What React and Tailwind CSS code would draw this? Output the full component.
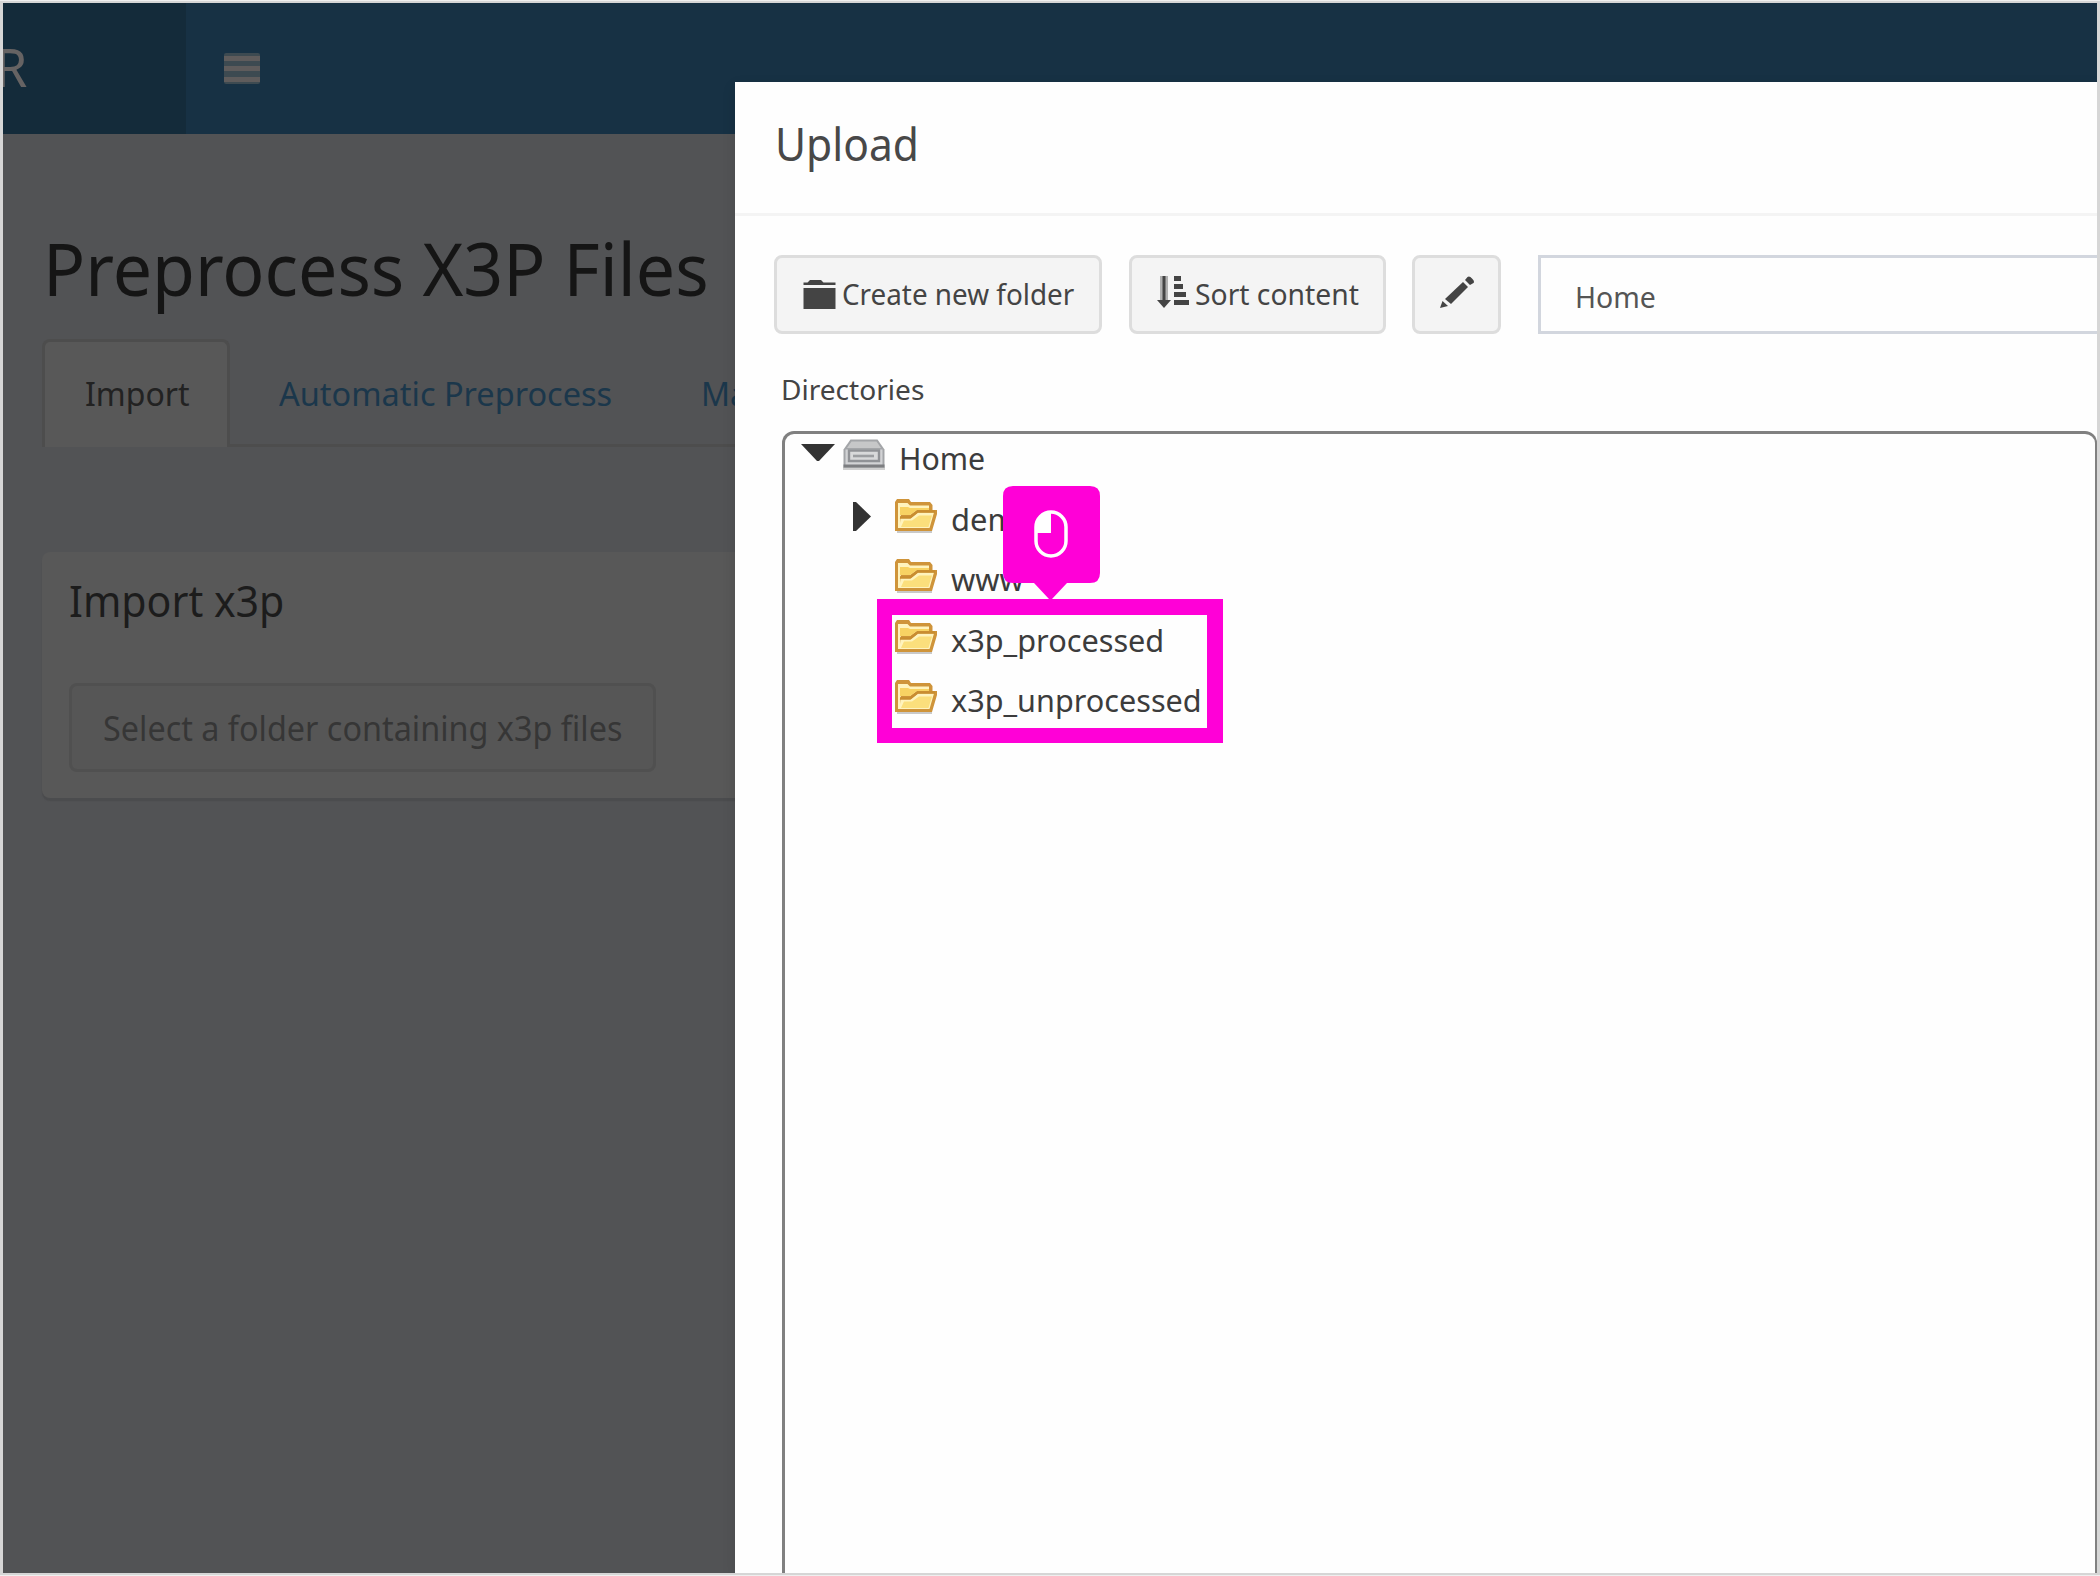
function FolderIcon() {
  return (
    <svg className="h-[34px] w-[42px] shrink-0" viewBox="0 0 42 34">
      <path d="M2 31.500H37V34H2Z" fill="#c9c9c9" />
      <path d="M0 3L2 0H14L16 3H35L37.500 6V11H42V15L37 32H0Z" fill="#cf943a" />
      <path d="M3 6V4H12.500L15 6.500H34V11H22L15 16H6L3 24Z" fill="#fff3bd" />
      <path d="M5 8H13L15 9H34V11H22L15 16H5Z" fill="#f8d263" />
      <path d="M3 22L5.500 17V29H3Z" fill="#fff3bd" />
      <path d="M6 19H16L23 13.500H39L34.500 29H4Z" fill="#fff3bd" />
      <path d="M9 21.500H17L24 16.500H37L33.500 28H6Z" fill="#fbdf7c" />
      <path d="M5 18.500H15L22.500 12.500H40" fill="none" stroke="#c98d30" strokeWidth="2.400" />
    </svg>
  );
}

function DriveIcon() {
  return (
    <svg className="h-[31px] w-[42px] shrink-0" viewBox="0 0 42 31">
      <path d="M0 28H42V31H0Z" fill="#cfcfcf" />
      <path d="M7.500 0.500H34.500L41.500 10.500V28.500H0.500V10.500Z" fill="#a3a5a8" />
      <path d="M8.500 2.500H33.500L38 9H4Z" fill="#c6c7c8" />
      <path d="M2.500 10.500H39.500V26H2.500Z" fill="#d2d3d5" />
      <path d="M6 11.500H36V22H6Z" fill="#d8d9da" stroke="#909296" strokeWidth="2.400" />
      <path d="M10 17H31" stroke="#9c9ea1" strokeWidth="2.600" />
      <path d="M0.500 27H41.500" stroke="#7d7e81" strokeWidth="3" />
    </svg>
  );
}

function NewFolderIcon() {
  return (
    <svg className="h-[29px] w-[33px] shrink-0" viewBox="0 0 33 29" fill="#444">
      <path d="M0.500 5V2.500H4.500L7 0H18L20.500 2.500H32.500V5Z" />
      <path d="M0.500 8H32.500V29H0.500Z" />
    </svg>
  );
}

function SortIcon() {
  return (
    <svg className="h-[32px] w-[33px] shrink-0" viewBox="0 0 33 32">
      <path d="M4 0H12V24H4Z" fill="#b0b0b0" />
      <path d="M6.500 0H9.500V24H15L8 32L1 24H6.500Z" fill="#444" />
      <path d="M18 0H25V5H18ZM18 8H27V13H18ZM18 16H30V21H18ZM18 24H33V29H18Z" fill="#444" />
    </svg>
  );
}

function PencilIcon() {
  return (
    <svg className="h-[32px] w-[34px] shrink-0" viewBox="0 0 34 32" fill="#444">
      <path d="M0 32L2.500 25L8 30Z" />
      <path d="M5 23L23 6L28 11L11 28Z" />
      <path d="M25 4L27.500 1Q29.500 -0.500 32 2.500Q35 5.500 33.500 7L30 9Z" />
    </svg>
  );
}

function TreeFolder({ name, expandable, scale }) {
  return (
    <li className="flex h-[60.5px] items-start pl-[68px]">
      <span className="mt-[3px] mr-6 w-[18px]">
        {expandable && (
          <svg className="h-[29px] w-[18px]" viewBox="0 0 18 29">
            <path d="M0 0H3L18 14.500L3 29H0Z" fill="#333" />
          </svg>
        )}
      </span>
      <FolderIcon />
      <span className={"mt-px ml-[14px] origin-left whitespace-nowrap " + scale}>{name}</span>
    </li>
  );
}

export default function App() {
  return (
    <div className="h-[1576px] w-[2100px] bg-[#efefef] py-px font-['Noto_Sans',sans-serif]">
      <div className="relative h-[1574px] overflow-hidden border-x-3 border-y-2 border-[#d6d6d6] bg-[#525355]">
        <header className="flex h-[131px] bg-[#173144]">
          <div className="w-[183px] overflow-hidden bg-[#142b3a] pt-[22px]">
            <span className="-ml-[8px] block text-[52px] leading-[84px] text-[#666363]">R</span>
          </div>
          <svg className="mt-[50px] ml-[37px] h-[31px] w-[37px]" viewBox="0 0 37 31">
            <rect width="36" height="31" x="1" rx="2" fill="#3d4a51" />
            <path d="M1 3H37V8H1ZM1 13H37V18H1ZM1 24H37V29H1Z" fill="#5f5c5c" />
          </svg>
        </header>

        <h1 className="mt-[86px] ml-[40px] w-max origin-left scale-x-[0.956] text-[73px] leading-[96px] text-[#151515]">
          Preprocess X3P Files
        </h1>

        <nav className="mt-[23px] ml-[39px] flex h-[108px] text-[32px] leading-[40px] text-[#1b374b]">
          <div className="w-[188px] rounded-t-[8px] border-3 border-b-0 border-[#4d4d4d] bg-[#585858] pt-[32px] pl-[40px] text-[#222]">
            Import
          </div>
          <div className="flex flex-1 border-b-3 border-[#4d4d4d] pt-[35px] whitespace-nowrap">
            <span className="ml-[49px] w-[328px] origin-left scale-x-[1.015]">Automatic Preprocess</span>
            <span className="ml-[94px]">Ma</span>
          </div>
        </nav>

        <section className="mt-[105px] ml-[39px] h-[246px] rounded-[8px] bg-[#585858] pt-[21px] pl-[27px] shadow-[0_3px_1px_#4b4c4e]">
          <h2 className="w-max origin-left scale-x-[0.955] text-[43px] leading-[56px] text-[#1c1c1c]">
            Import x3p
          </h2>
          <button className="mt-[54px] flex h-[89px] w-[587px] items-center rounded-[8px] border-3 border-[#505050] bg-[#565656] pt-px pl-[31px]">
            <span className="origin-left scale-x-[0.952] text-[34px] whitespace-nowrap text-[#363636]">
              Select a folder containing x3p files
            </span>
          </button>
        </section>

        <div className="absolute top-[79px] left-[732px] flex h-[1491px] w-[1362px] flex-col bg-[#fefefe] shadow-[0_5px_13px_rgba(0,0,0,0.12)]">
          <div className="h-[134px] border-b-3 border-[#f4f4f4] pt-[31px] pl-[40px]">
            <h4 className="w-max origin-left scale-x-[0.925] text-[46px] leading-[60px] text-[#484848]">Upload</h4>
          </div>

          <div className="flex pt-[39px] pl-[39px] text-[29px] text-[#444]">
            <button className="flex h-[79px] w-[328px] items-center rounded-[8px] border-3 border-[#ddd] bg-[#f4f4f4] pl-[26px]">
              <NewFolderIcon />
              <span className="-mt-[2px] ml-[6px] origin-left scale-x-[0.96] whitespace-nowrap">Create new folder</span>
            </button>
            <button className="ml-[27px] flex h-[79px] w-[257px] items-center rounded-[8px] border-3 border-[#ddd] bg-[#f4f4f4] pl-6">
              <span className="-mt-[5px]">
                <SortIcon />
              </span>
              <span className="-mt-[2px] ml-[6px] origin-left scale-x-[0.975] whitespace-nowrap">Sort content</span>
            </button>
            <button className="ml-[26px] flex h-[79px] w-[89px] items-center justify-center rounded-[8px] border-3 border-[#ddd] bg-[#f4f4f4] pb-[5px]">
              <PencilIcon />
            </button>
            <div className="ml-[37px] flex h-[79px] flex-1 items-center border-3 border-r-0 border-[#d2d6de] bg-[#fefefe] pt-[5px] pl-[34px] text-[#555]">
              <span className="origin-left scale-x-[0.98]">Home</span>
            </div>
          </div>

          <div className="mt-[36px] ml-[46px] w-max origin-left scale-x-[1.04] text-[27px] leading-[40px] text-[#444]">
            Directories
          </div>

          <ul className="mt-[21px] ml-[47px] flex-1 rounded-t-[12px] border-3 border-r-2 border-b-0 border-[#808080] pt-1 text-[30px] leading-[40px] text-[#3c3c3c]">
            <li className="flex h-[60.5px] items-start pl-4">
              <svg className="mt-[6px] mr-2 h-[17px] w-[34px]" viewBox="0 0 34 17">
                <path d="M0 0H34L18 17H16Z" fill="#333" />
              </svg>
              <span className="mt-px">
                <DriveIcon />
              </span>
              <span className="mt-px ml-[14px] origin-left scale-x-[1.01]">Home</span>
            </li>
            <TreeFolder name="demo" expandable scale="scale-x-[1.03]" />
            <TreeFolder name="www" scale="scale-x-[1.03]" />
            <TreeFolder name="x3p_processed" scale="scale-x-[1.022]" />
            <TreeFolder name="x3p_unprocessed" scale="scale-x-[1.02]" />
          </ul>
        </div>

        <div className="absolute top-[596px] left-[874px] h-[144px] w-[346px] border-15 border-t-16 border-r-16 border-[#ff00d7]" />
        <svg className="absolute top-[483px] left-[1000px] h-[114px] w-[97px]" viewBox="0 0 97 114">
          <path d="M10 0H87Q97 0 97 10V87Q97 97 87 97H64L49 113H46L31 97H10Q0 97 0 87V10Q0 0 10 0Z" fill="#ff00d7" />
          <path d="M48 26C38 26 34 33 34 42V47H48Z" fill="#fff" />
          <rect x="33" y="26" width="30" height="44" rx="15" fill="none" stroke="#fff" strokeWidth="3.500" />
        </svg>
      </div>
    </div>
  );
}
